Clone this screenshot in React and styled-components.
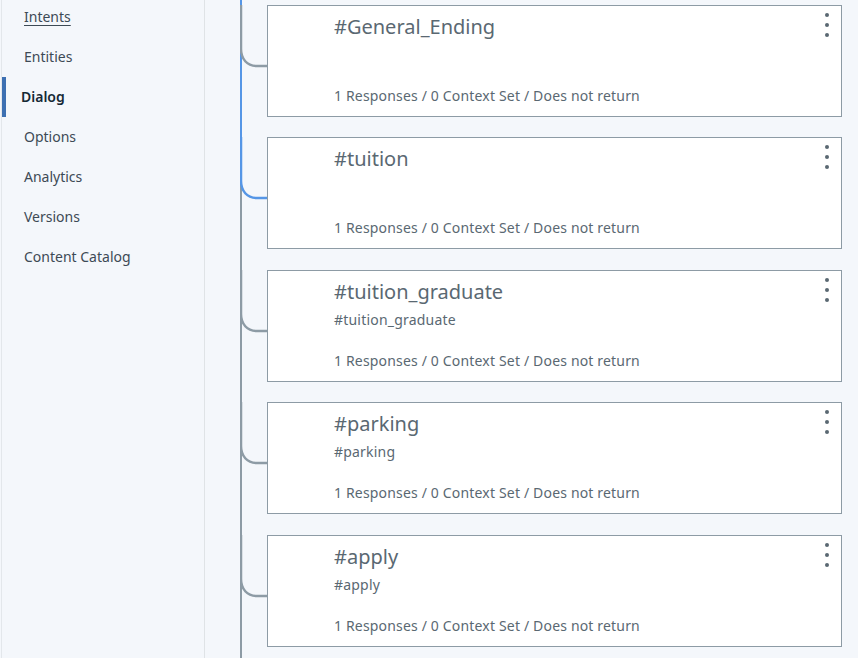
import React from 'react';
import styled, { createGlobalStyle } from 'styled-components';

const GlobalStyle = createGlobalStyle`
    html, body {
        margin: 0;
        padding: 0;
        background: #f4f7fb;
        font-family: "Noto Sans", "Open Sans", sans-serif;
    }
`

const StyledPage = styled.div`
    display: flex;
    height: 100vh;
    overflow: hidden;
    background: #f4f7fb;
`

const Sidebar = styled.nav`
    width: 202px;
    flex-shrink: 0;
    margin-left: 1px;
    border-left: 1px solid #e3e7eb;
    border-right: 1px solid #dfe3e6;
    background: #f4f7fb;
    .sidebar__list {
        list-style: none;
        margin: -4px 0 0;
        padding: 0;
    }
`

const NavItem = styled.li`
    position: relative;
    height: 40px;
    display: flex;
    align-items: center;
    padding-left: ${({ $active }) => ($active ? '19px' : '22px')};
    font-size: 14px;
    color: ${({ $active }) => ($active ? '#152935' : '#3d4a55')};
    font-weight: ${({ $active }) => ($active ? 600 : 400)};
    text-decoration: ${({ $underline }) => ($underline ? 'underline' : 'none')};
    text-underline-offset: 3px;
    &::before {
        content: '';
        display: ${({ $active }) => ($active ? 'block' : 'none')};
        position: absolute;
        left: 0;
        top: 1px;
        width: 4px;
        height: 40px;
        background: #3d70b2;
    }
`

const Main = styled.main`
    flex: 1;
    padding-left: 35px;
`

const Tree = styled.div`
    position: relative;
    height: 100%;
    border-left: 2px solid #8d9ba5;
    padding-top: 4.6px;
    display: flex;
    flex-direction: column;
    gap: 20.5px;
    &::before {
        content: '';
        position: absolute;
        left: -2px;
        top: 0;
        width: 2px;
        height: 138px;
        background: #5596e6;
    }
`

const Row = styled.div`
    position: relative;
    z-index: 1;
    display: flex;
    flex-shrink: 0;
    .row__connector {
        margin-left: -2px;
        width: 27px;
        height: 64px;
        flex-shrink: 0;
    }
`

const Card = styled.div`
    width: 573px;
    height: 110px;
    border: 1px solid #8d9ba5;
    background: #ffffff;
    display: flex;
    .card__body {
        flex: 1;
        display: flex;
        flex-direction: column;
        padding: 9px 0 10px 66px;
        color: #5a6872;
    }
    .card__title {
        font-size: 20px;
        line-height: 24px;
    }
    .card__condition {
        margin-top: 6px;
        font-size: 14px;
        line-height: 20px;
        letter-spacing: 0.2px;
    }
    .card__footer {
        margin-top: auto;
        font-size: 14px;
        line-height: 20px;
        letter-spacing: 0.17px;
    }
`

const MenuButton = styled.button`
    align-self: flex-start;
    width: 20px;
    margin: 7px 4px 0 0;
    padding: 0;
    border: none;
    background: none;
    display: flex;
    flex-direction: column;
    align-items: center;
    gap: 6px;
    span {
        width: 4px;
        height: 4px;
        border-radius: 50%;
        background: #5a6872;
    }
`

const navItems = ['Intents', 'Entities', 'Dialog', 'Options', 'Analytics', 'Versions', 'Content Catalog']

const nodes = [
    { title: '#General_Ending', condition: '', selected: false },
    { title: '#tuition', condition: '', selected: true },
    { title: '#tuition_graduate', condition: '#tuition_graduate', selected: false },
    { title: '#parking', condition: '#parking', selected: false },
    { title: '#apply', condition: '#apply', selected: false },
]

const Connector = ({ selected }) => (
    <svg className='row__connector' viewBox='0 0 27 64'>
        <path
            d='M1 0 V44 C1 54 7 61 17 61 H27'
            fill='none'
            stroke={selected ? '#5596e6' : '#8d9ba5'}
            strokeWidth='2.5'
        />
    </svg>
)

const DialogNode = ({ title, condition, selected }) => (
    <Row>
        <Connector selected={selected} />
        <Card>
            <div className='card__body'>
                <div className='card__title'>{title}</div>
                {condition && <div className='card__condition'>{condition}</div>}
                <div className='card__footer'>1 Responses / 0 Context Set / Does not return</div>
            </div>
            <MenuButton aria-label='Node options'>
                <span /><span /><span />
            </MenuButton>
        </Card>
    </Row>
)

const App = () => {
    return (
        <StyledPage>
            <GlobalStyle />
            <Sidebar>
                <ul className='sidebar__list'>
                    {navItems.map(item => (
                        <NavItem key={item} $active={item === 'Dialog'} $underline={item === 'Intents'}>
                            {item}
                        </NavItem>
                    ))}
                </ul>
            </Sidebar>
            <Main>
                <Tree>
                    {nodes.map(node => (
                        <DialogNode key={node.title} {...node} />
                    ))}
                </Tree>
            </Main>
        </StyledPage>
    )
}

export default App
